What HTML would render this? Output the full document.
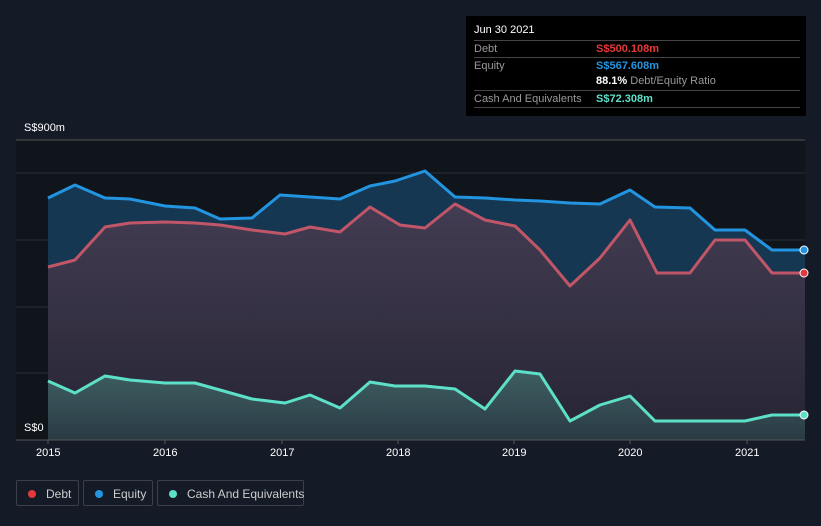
<!DOCTYPE html>
<html><head><meta charset="utf-8"><style>
body{margin:0;width:821px;height:526px;background:#151b26;font-family:"Liberation Sans",sans-serif;overflow:hidden;position:relative}
.tt{position:absolute;left:466px;top:16px;width:340px;height:100px;background:#000;color:#fff;font-size:11px}
.tt .r{position:absolute;left:8px;width:326px;border-top:1px solid #444;height:16px}
.lab{color:#999;position:absolute;left:0;top:2px}
.val{position:absolute;left:122px;top:2px;font-weight:bold}
.leg{position:absolute;top:480px;height:26px;border:1px solid #3a3f48;border-radius:2px;color:#ccc;font-size:12px;line-height:26px;box-sizing:border-box;white-space:nowrap}
.leg i{display:inline-block;width:8px;height:8px;border-radius:50%;margin:0 10px 0 11px;vertical-align:-0px}
.ax{position:absolute;color:#fff;font-size:11px}
</style></head><body>
<svg width="821" height="526" style="position:absolute;left:0;top:0">
<defs>
<linearGradient id="dg" x1="0" y1="0" x2="0" y2="1"><stop offset="0" stop-color="#453c52"/><stop offset="1" stop-color="#272432"/></linearGradient>
<linearGradient id="cg" x1="0" y1="0" x2="0" y2="1"><stop offset="0" stop-color="#3e5f62"/><stop offset="1" stop-color="#2a3a44"/></linearGradient>
</defs>
<rect x="16" y="140" width="789" height="300" fill="#10141b"/>
<g stroke="#2a2f38" stroke-width="1"><line x1="16" y1="173" x2="805" y2="173"/><line x1="16" y1="240" x2="805" y2="240"/><line x1="16" y1="307" x2="805" y2="307"/><line x1="16" y1="373" x2="805" y2="373"/></g>
<line x1="16" y1="140" x2="805" y2="140" stroke="#555"/>
<polygon fill="#153752" points="48,198 75,185 105,198 130,199 165,206 195,208 220,219 252,218 280,195 310,197 340,199 370,186 395,181 425,171 455,197 485,198 515,200 540,201 570,203 600,204 630,190 655,207 690,208 715,230 745,230 772,250 805,250 805,440 48,440"/>
<polygon fill="url(#dg)" opacity="0.95" points="48,267 75,260 105,227 130,223 165,222 195,223 220,225 252,230 285,234 310,227 340,232 370,207 400,225 425,228 455,204 485,220 515,226 540,250 570,286 600,258 630,220 657,273 690,273 715,240 745,240 772,273 805,273 805,440 48,440"/>
<polygon fill="url(#cg)" points="48,381 75,393 105,376 130,380 165,383 195,383 220,390 252,399 285,403 310,395 340,408 370,382 395,386 425,386 455,389 485,409 515,371 540,374 570,421 600,405 630,396 655,421 690,421 745,421 772,415 805,415 805,440 48,440"/>
<g fill="none" stroke-width="3" stroke-linejoin="round">
<polyline stroke="#2394df" points="48,198 75,185 105,198 130,199 165,206 195,208 220,219 252,218 280,195 310,197 340,199 370,186 395,181 425,171 455,197 485,198 515,200 540,201 570,203 600,204 630,190 655,207 690,208 715,230 745,230 772,250 805,250"/>
<polyline stroke="#c05668" points="48,267 75,260 105,227 130,223 165,222 195,223 220,225 252,230 285,234 310,227 340,232 370,207 400,225 425,228 455,204 485,220 515,226 540,250 570,286 600,258 630,220 657,273 690,273 715,240 745,240 772,273 805,273"/>
<polyline stroke="#5de0c8" points="48,381 75,393 105,376 130,380 165,383 195,383 220,390 252,399 285,403 310,395 340,408 370,382 395,386 425,386 455,389 485,409 515,371 540,374 570,421 600,405 630,396 655,421 690,421 745,421 772,415 805,415"/>
</g>
<circle cx="804" cy="250" r="4" fill="#2394df" stroke="#fff"/>
<circle cx="804" cy="273" r="4" fill="#e0393f" stroke="#fff"/>
<circle cx="804" cy="415" r="4" fill="#5de0c8" stroke="#fff"/>
<line x1="16" y1="440" x2="805" y2="440" stroke="#555"/>
<g stroke="#555"><line x1="48" y1="440" x2="48" y2="444"/><line x1="165" y1="440" x2="165" y2="444"/><line x1="282" y1="440" x2="282" y2="444"/><line x1="398" y1="440" x2="398" y2="444"/><line x1="514" y1="440" x2="514" y2="444"/><line x1="630" y1="440" x2="630" y2="444"/><line x1="747" y1="440" x2="747" y2="444"/></g>
</svg>
<div class="ax" style="left:24px;top:122px">S$900m</div>
<div class="ax" style="left:24px;top:422px">S$0</div>
<div class="ax" style="left:36px;top:447px">2015</div>
<div class="ax" style="left:153px;top:447px">2016</div>
<div class="ax" style="left:270px;top:447px">2017</div>
<div class="ax" style="left:386px;top:447px">2018</div>
<div class="ax" style="left:502px;top:447px">2019</div>
<div class="ax" style="left:618px;top:447px">2020</div>
<div class="ax" style="left:735px;top:447px">2021</div>
<div class="tt">
<div style="position:absolute;left:8px;top:8px">Jun 30 2021</div>
<div class="r" style="top:24px"><span class="lab">Debt</span><span class="val" style="color:#e5383b">S$500.108m</span></div>
<div class="r" style="top:41px"><span class="lab">Equity</span><span class="val" style="color:#2394df">S$567.608m</span></div>
<div class="r" style="top:57px;border:0"><span class="val" style="color:#fff">88.1% <span style="color:#999;font-weight:normal">Debt/Equity Ratio</span></span></div>
<div class="r" style="top:74px"><span class="lab">Cash And Equivalents</span><span class="val" style="color:#5de0c8">S$72.308m</span></div>
<div class="r" style="top:91px;height:0"></div>
</div>
<div class="leg" style="left:16px;width:63px"><i style="background:#e5383b"></i>Debt</div>
<div class="leg" style="left:83px;width:70px"><i style="background:#2394df"></i>Equity</div>
<div class="leg" style="left:157px;width:147px"><i style="background:#5de0c8"></i>Cash And Equivalents</div>
</body></html>
